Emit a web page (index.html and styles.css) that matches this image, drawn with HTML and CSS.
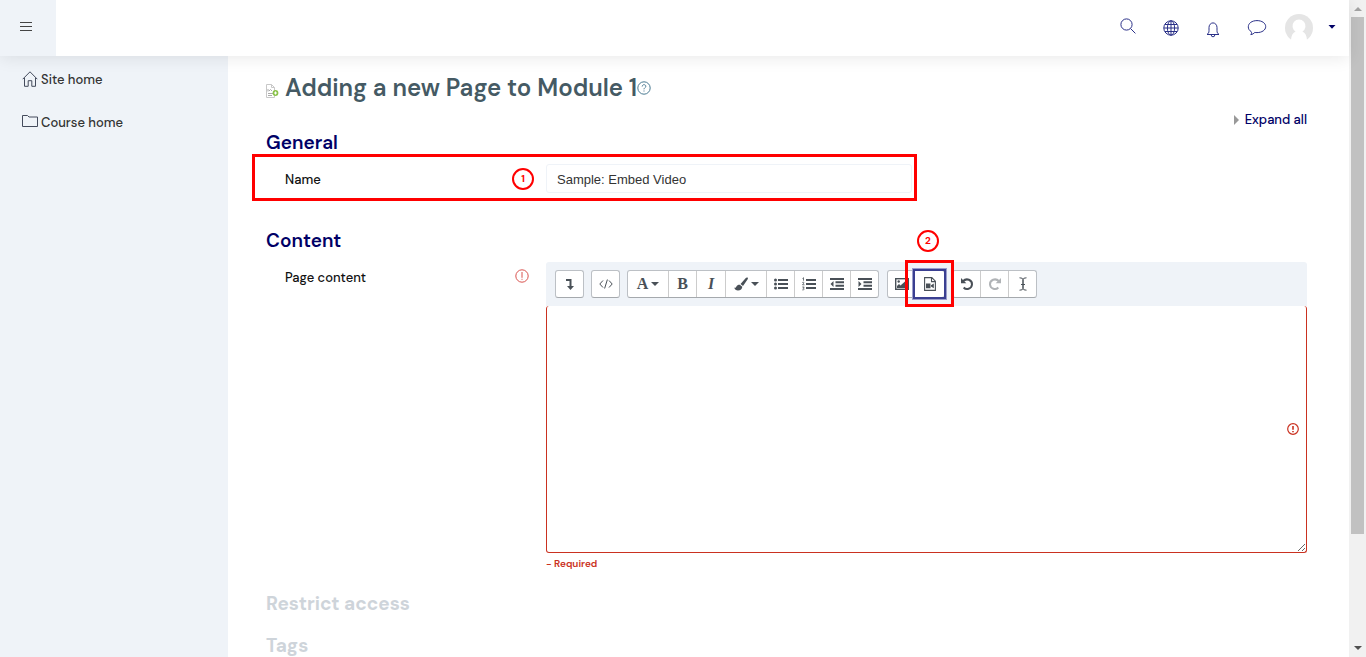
FILE: index.html
```html
<!DOCTYPE html>
<html lang="en">
<head>
<meta charset="utf-8">
<title>Adding a new Page to Module 1</title>
<link rel="stylesheet" href="styles.css">
</head>
<body>
<div class="app">
  <div class="page">
    <header class="topbar">
      <button class="menu-btn" aria-label="Menu"><svg width="12" height="12" viewBox="0 0 12 12"><path d="M0 1.5h12M0 5.5h12M0 9.5h12" stroke="#444" fill="none"/></svg></button>
      <nav class="tools" aria-label="User tools">
        <button class="tool tool-search" aria-label="Search"><svg width="16" height="16" viewBox="0 0 16 16"><circle cx="6.5" cy="6.5" r="5.6"/><path d="M10.6 10.6l4.8 4.8"/></svg></button>
        <button class="tool" aria-label="Language"><svg width="16" height="16" viewBox="0 0 16 16"><circle cx="8" cy="8" r="7.2"/><ellipse cx="8" cy="8" rx="3.6" ry="7.2"/><path d="M8 .8v14.4M.8 8h14.400M2 4.500h12M2 11.500h12"/></svg></button>
        <button class="tool tool-bell" aria-label="Notifications"><svg width="14" height="16" viewBox="0 0 14 16"><path d="M1 12.500c1.500-1 2-2 2-4V5.500a4 4.600 0 0 1 8 0v3c0 2 .5 3 2 4zM5.200 12.800a1.800 2 0 0 0 3.600 0"/></svg></button>
        <button class="tool" aria-label="Messages"><svg width="20" height="18" viewBox="0 0 20 18"><path d="M4.200 12.600C2 11.400 1.300 9.600 1.300 7.800 1.300 4.200 5 1.600 10 1.600s8.700 2.600 8.700 6-3.700 6-8.700 6c-.8 0-1.500 0-2.200-.2-1 1.100-2.300 2-4 2.200.7-.9 1-1.900.4-3z"/></svg></button>
        <button class="tool profile" aria-label="Profile"><svg class="avatar" width="28" height="28" viewBox="0 0 28 28"><circle cx="14" cy="14" r="14" fill="#e5e5e5"/><path d="M6 26c.3-4.500 1.800-7.300 4.600-8.500A6.500 6.500 0 1 1 17.400 17.500c2.800 1.200 4.300 4 4.600 8.500l-2 2H8z" fill="#fff"/></svg><svg class="drop" width="8" height="4" viewBox="0 0 8 4"><path d="M.5 0h7L4 3.800z"/></svg></button>
      </nav>
    </header>
    <div class="body">
      <nav class="sidebar" aria-label="Site">
        <a href="#" class="side-link"><svg width="16" height="16" viewBox="0 0 16 16"><path d="M.7 8.200L8 .8l7.300 7.400M2.500 7v8.300h3.700v-5.600h3.600v5.600h3.700V7"/></svg>Site home</a>
        <a href="#" class="side-link"><svg width="16" height="16" viewBox="0 0 16 16"><path d="M.5 12.500v-11h5l1.500 1.500h8.500v9.500z"/></svg>Course home</a>
      </nav>
      <main class="content">
        <h1 class="title">
          <svg class="page-icon" width="13" height="14" viewBox="0 0 13 14"><path d="M.5.5h5l3 3v10h-8zM5.500.5v3h3" fill="#fff" stroke="#c8c8c8"/><path d="M2 7.500V5M3 7l1.500-1.500L6 7M2 9.500h5M2 11.500h4" stroke="#aaa" fill="none"/><circle cx="9.500" cy="9" r="2.900" fill="#8bc34a"/><path d="M9.500 7.500v3M8 9h3" stroke="#fff"/></svg>
          <span>Adding a new Page to Module 1</span>
          <button class="help" aria-label="Help"><svg width="14" height="14" viewBox="0 0 14 14"><circle cx="7" cy="7" r="6.200"/><path d="M5.200 5.500c0-2.400 3.600-2.400 3.600-.2 0 1.500-1.800 1.400-1.800 3M7 9.500v1"/></svg></button>
        </h1>
        <div class="expand"><a href="#"><span class="tri"></span>Expand all</a></div>
        <h2 class="section">General</h2>
        <div class="row name-row">
          <label class="label" for="name">Name</label>
          <input id="name" class="name-input" type="text" value="Sample: Embed Video">
          <span class="frame frame-name"></span>
          <span class="step step-one">1</span>
        </div>
        <h2 class="section section-content">Content</h2>
        <div class="row editor-row">
          <div class="label-line"><label class="label" for="editor">Page content</label><svg class="required" width="14" height="14" viewBox="0 0 14 14"><circle cx="7" cy="7" r="6.200"/><path d="M7 3v5.800M7 9.800v1"/></svg></div>
          <div class="editor">
            <div class="toolbar">
              <div class="group"><button class="btn" aria-label="Show more"><svg width="14" height="14" viewBox="0 0 14 14"><path d="M3 3h4.500v7" stroke="#495057" stroke-width="2" fill="none"/><path d="M4 9h7l-3.500 4z" fill="#495057"/></svg></button></div>
              <div class="group"><button class="btn" aria-label="HTML"><svg width="14" height="14" viewBox="0 0 14 14"><path d="M4 3.500L.8 7 4 10.500M10 3.500L13.200 7 10 10.500M8.400 2.500l-2.800 9" stroke="#495057" fill="none"/></svg></button></div>
              <div class="group">
                <button class="btn wide" aria-label="Paragraph styles"><span class="glyph">A</span><span class="caret"></span></button>
                <button class="btn" aria-label="Bold"><span class="glyph">B</span></button>
                <button class="btn italic-btn" aria-label="Italic"><span class="glyph italic">I</span></button>
                <button class="btn wide" aria-label="Colour"><svg width="14" height="14" viewBox="0 0 14 14"><path d="M13.500.6c.7.5.4 1.300 0 2L9 9 6.500 7 11.800 1c.5-.6 1.100-.8 1.700-.4zM5.800 7.700L8.300 9.800C8.200 12 6.500 13.500 4 13.500c-2 0-3.300-1-3.800-3 1.500.6 1.800-.2 2.400-1.300.7-1.200 1.800-1.700 3.200-1.500z" fill="#495057"/></svg><span class="caret"></span></button>
                <button class="btn" aria-label="Bulleted list"><svg width="14" height="14" viewBox="0 0 14 14"><path d="M4 3h10M4 7h10M4 11h10" stroke="#495057" stroke-width="2"/><g fill="#495057"><circle cx="1.500" cy="3" r="1.500"/><circle cx="1.500" cy="7" r="1.500"/><circle cx="1.500" cy="11" r="1.500"/></g></svg></button>
                <button class="btn" aria-label="Numbered list"><svg width="14" height="14" viewBox="0 0 14 14"><path d="M4 3h10M4 7h10M4 11h10" stroke="#495057" stroke-width="2"/><path d="M.5 1.500l1-.8v3M.3 5.500c2-1 2 .5.2 2.300h2M.3 10h1.900l-1 1.300c1.500 0 1.200 2-.9 1.600" stroke="#495057" fill="none" stroke-width=".8"/></svg></button>
                <button class="btn" aria-label="Outdent"><svg width="14" height="14" viewBox="0 0 14 14"><path d="M0 2h14M5.500 5.300H14M5.500 8.700H14M0 12h14" stroke="#495057" stroke-width="2"/><path d="M3.500 4v6L.5 7z" fill="#495057"/></svg></button>
                <button class="btn" aria-label="Indent"><svg width="14" height="14" viewBox="0 0 14 14"><path d="M0 2h14M5.500 5.300H14M5.500 8.700H14M0 12h14" stroke="#495057" stroke-width="2"/><path d="M.5 4v6l3-3z" fill="#495057"/></svg></button>
              </div>
              <div class="group group-media">
                <button class="btn" aria-label="Insert image"><svg width="14" height="12" viewBox="0 0 14 12"><rect x=".7" y=".7" width="12.600" height="10.600" fill="#fff" stroke="#495057" stroke-width="1.400"/><circle cx="3.700" cy="3.500" r="1.200" fill="#495057"/><path d="M2 10V8l2-2 1.500 1.500L10 3.500l2.500 2.500v4z" fill="#495057"/></svg></button>
                <button class="btn video" aria-label="Insert media"><svg width="12" height="14" viewBox="0 0 12 14"><path d="M.6.6h7.200l3.600 3.600v9.200H.6zM7.500.6v4h4" fill="none" stroke="#495057" stroke-width="1.100"/><path d="M2 6.500h4.500v4.700H2zM7 8.300l2.800-1.800v4.700L7 9.400z" fill="#495057"/></svg><span class="frame frame-video"></span><span class="step step-two">2</span></button>
              </div>
              <div class="group">
                <button class="btn" aria-label="Undo"><svg width="14" height="14" viewBox="0 0 14 14"><path d="M3 4.300C6.500.5 12.300 3 12 7.500c-.4 4.500-5.800 5.800-8.300 3" stroke="#495057" stroke-width="2" fill="none"/><path d="M1 1v5.300h5.300z" fill="#495057"/></svg></button>
                <button class="btn" aria-label="Redo"><svg width="14" height="14" viewBox="0 0 14 14"><path d="M11 4.300C7.500.5 1.700 3 2 7.500c.4 4.500 5.800 5.800 8.300 3" stroke="#b0b3b6" stroke-width="2" fill="none"/><path d="M13 1v5.300H7.700z" fill="#b0b3b6"/></svg></button>
                <button class="btn" aria-label="Screenreader helper"><svg width="10" height="14" viewBox="0 0 10 14"><path d="M1.500.8Q5 .8 5 2.500v9Q5 13.200 1.500 13.200M8.500.8Q5 .8 5 2.500v9q0 1.700 3.500 1.700M3 7.500h4" stroke="#495057" fill="none"/></svg></button>
              </div>
            </div>
            <div class="area-wrap">
              <textarea id="editor" class="area"></textarea>
              <svg class="invalid" width="12" height="12" viewBox="0 0 12 12"><circle cx="6" cy="6" r="5.300"/><path d="M6 3v3.700M6 7.900v1.300" stroke-width="1.600"/></svg>
            </div>
            <p class="error">- Required</p>
          </div>
        </div>
        <h2 class="section muted">Restrict access</h2>
        <h2 class="section muted">Tags</h2>
      </main>
    </div>
  </div>
  <div class="scrollbar"><span class="arrow up"></span><span class="thumb"></span><span class="arrow down"></span></div>
</div>
</body>
</html>
```
FILE: styles.css
```css
* { box-sizing: border-box; }
body {
  margin: 0;
  font: 500 13px/20px "DM Sans", Inter, "Liberation Sans", sans-serif;
  font-optical-sizing: none;
  color: #111;
  background: #fff;
}
button { padding: 0; border: 0; background: none; font: inherit; color: inherit; }
a { color: inherit; text-decoration: none; }
svg { flex: none; }
.app { display: flex; height: 100vh; overflow: hidden; }
.page { flex: 1; min-width: 0; display: flex; flex-direction: column; }

.topbar {
  position: relative;
  z-index: 1;
  flex: none;
  display: flex;
  justify-content: space-between;
  height: 56px;
  background: #fff;
  box-shadow: 0 2px 16px rgba(0, 0, 0, .09);
}
.menu-btn { width: 56px; padding: 0 4px 2px 0; background: #eff3f8; display: flex; align-items: center; justify-content: center; }
.tools { display: flex; align-items: center; gap: 27px; padding-right: 13px; }
.tool { display: flex; align-items: center; }
.tool svg { fill: none; stroke: #2a3088; stroke-width: 1; }
.tool-search { margin-bottom: 5px; }
.tool-bell { margin-top: 3px; }
.profile { gap: 15px; margin-left: -9px; }
.tool .avatar { stroke: none; }
.tool .drop { fill: #000066; stroke: none; margin-bottom: 2px; }

.body { flex: 1; min-height: 0; display: flex; }
.sidebar { flex: none; width: 228px; padding: 14px 22px; background: #eff3f8; display: flex; flex-direction: column; gap: 23px; }
.side-link { display: flex; align-items: center; gap: 3px; color: #333; }
.side-link svg { fill: none; stroke: #444b5c; margin-bottom: 3px; }

.content { flex: 1; min-width: 0; padding: 16px 42px 0 38px; overflow: hidden; }
.title { display: flex; align-items: center; margin: 0; font-size: 24px; line-height: 32px; font-weight: 600; color: #455a64; }
.title span { margin-left: 6px; }
.page-icon { margin-top: 6px; }
.help { display: flex; }
.help svg { fill: none; stroke: #4a7a92; }
.expand { display: flex; justify-content: flex-end; margin-top: 6px; color: #000066; }
.expand a { display: flex; align-items: center; gap: 6px; }
.tri { border: solid transparent; border-width: 5px 0 5px 5px; border-left-color: #999; }
.section { margin: 0; padding-top: 1px; font-size: 19px; line-height: 24px; font-weight: 600; color: #000066; }
.section.muted { color: #ced4da; font-weight: 700; margin-bottom: 17px; }
.row { position: relative; display: grid; grid-template-columns: 280px 1fr; }
.name-row { margin-top: 9px; align-items: center; }
.label { padding: 2px 0 0 19px; }
.name-input {
  width: 366px;
  height: 29px;
  padding: 2px 10px 0;
  border: 1px solid #eff3f8;
  border-radius: 3px;
  font: 13px "Liberation Sans", Arial, sans-serif;
  color: #333;
}
.frame { position: absolute; border: 3px solid #f00; pointer-events: none; }
.frame-name { left: -14px; top: -10px; width: 665px; height: 47px; }
.step {
  position: absolute;
  width: 22px;
  height: 22px;
  border: 2px solid #f00;
  border-radius: 50%;
  color: #f00;
  font: 700 10px/18px "DM Sans", Inter, sans-serif;
  text-align: center;
}
.step-one { left: 246px; top: 4px; }
.section-content { margin-top: 35px; }
.editor-row { margin: 9px 0 20px; }
.label-line { display: flex; justify-content: space-between; align-items: flex-start; padding: 4px 17px 0 0; }
.required { fill: none; stroke: #d9534f; margin-top: 3px; }
.toolbar { display: flex; gap: 7px; height: 44px; padding: 8px 9px; background: #eff3f8; border-radius: 3px 3px 0 0; }
.group { display: flex; border: 1px solid #bcc0c5; border-bottom-color: #a5a9ad; border-radius: 3px; background: #fff; }
.group-media { margin-left: 1px; }
.btn { position: relative; width: 28px; display: flex; align-items: center; justify-content: center; gap: 3px; color: #495057; }
.group .btn:first-child { width: 27px; }
.group .btn.wide { width: 41px; }
.group .btn.wide:first-child { width: 40px; }
.btn.italic-btn { width: 29px; }
.btn + .btn { border-left: 1px solid #ccc; }
.glyph { font: 700 16px/20px "Liberation Serif", serif; }
.italic { font-style: italic; }
.caret { border: solid transparent; border-width: 4px 4px 0; border-top-color: #495057; }
.btn.video { width: 29px; border: 0; outline: 2px solid #3a3f91; box-shadow: 0 0 0 3px #9a9dcb; }
.frame-video { left: -10px; top: -11px; width: 49px; height: 47px; z-index: 1; }
.step-two { left: 2px; top: -41px; }
.area-wrap { position: relative; }
.area {
  display: block;
  width: 100%;
  height: 247px;
  border: 1px solid #ca3120;
  border-top: 0;
  border-radius: 3px;
  resize: vertical;
  background: #fff;
}
.invalid { position: absolute; right: 8px; top: calc(50% - 7px); fill: none; stroke: #ca3120; stroke-width: 1.2; }
.error { margin: 4px 0 0; font-size: 10px; line-height: 14px; font-weight: 600; color: #ca3120; }

.scrollbar { flex: none; width: 17px; background: #f1f1f1; display: flex; flex-direction: column; align-items: center; padding: 7px 0; }
.thumb { width: 13px; height: 517px; margin: 6px 0 auto; background: #c1c1c1; }
.arrow { border: solid transparent; }
.up { border-width: 0 4px 4px; border-bottom-color: #a3a3a3; }
.down { border-width: 4px 4px 0; border-top-color: #505050; }
```
